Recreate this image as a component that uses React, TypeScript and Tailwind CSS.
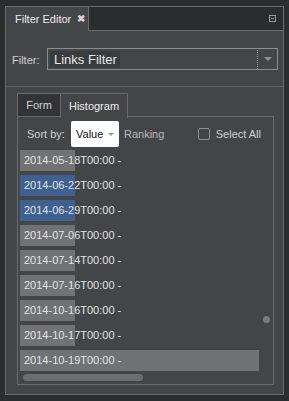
import React from "react";

type Row = {
  label: string;
  tone: "gray" | "blue";
  wide?: boolean;
};

const rows: Row[] = [
  { label: "2014-05-18T00:00 -", tone: "gray" },
  { label: "2014-06-22T00:00 -", tone: "blue" },
  { label: "2014-06-29T00:00 -", tone: "blue" },
  { label: "2014-07-06T00:00 -", tone: "gray" },
  { label: "2014-07-14T00:00 -", tone: "gray" },
  { label: "2014-07-16T00:00 -", tone: "gray" },
  { label: "2014-10-16T00:00 -", tone: "gray" },
  { label: "2014-10-17T00:00 -", tone: "gray" },
  { label: "2014-10-19T00:00 -", tone: "gray", wide: true },
];

const font = { fontFamily: '"Liberation Sans", Arial, sans-serif' };

const HistogramRow = ({ row }: { row: Row }) => (
  <div className="relative h-[25px] flex items-start">
    <div
      className={
        (row.wide ? "w-[239px] " : "w-[55px] ") +
        (row.tone === "blue" ? "bg-[#3e6191] " : "bg-[#717273] ") +
        "h-[21px]"
      }
    />
    <span className="absolute left-[4px] top-[3px] text-[11px] leading-[15px] text-[#e2e2e2] whitespace-nowrap">
      {row.label}
    </span>
  </div>
);

const App = () => {
  return (
    <div className="w-[289px] h-[401px] bg-[#2b2c2e] pt-[6px] pl-[5px] pr-[5px] pb-[6px]" style={font}>
      <div className="h-[389px] border border-[#6a6b6d] bg-[#444547] flex flex-col">
        {/* header */}
        <div className="h-[24px] flex shrink-0">
          <div className="w-[83px] shrink-0 h-full bg-[#444547] border-r border-[#6a6b6d] flex items-center pl-[9px] gap-[6px] whitespace-nowrap">
            <span className="text-[11px] text-[#ececec] leading-none">Filter Editor</span>
            <span className="text-[10px] text-[#d4d4d4] leading-none font-bold">✖</span>
          </div>
          <div className="flex-1 h-full bg-[#2b2c2e] border-b border-[#6a6b6d] flex items-center justify-end pr-[7px]">
            <div className="w-[7px] h-[7px] border border-[#9a9a9a] flex items-center justify-center">
              <div className="w-[3px] h-px bg-[#9a9a9a]" />
            </div>
          </div>
        </div>

        {/* filter row */}
        <div className="h-[56px] shrink-0 flex items-center pl-[6px] pr-[5px] pt-[1px] border-b border-[#5d5e60]">
          <span className="text-[11px] text-[#d2d2d2] w-[35px] pt-[2px]">Filter:</span>
          <div className="flex-1 h-[22px] border border-[#8c8d8f] flex items-center">
            <div className="ml-[2px] h-[16px] w-[70px] bg-[#3a3b3d] flex items-center pl-[4px]">
              <span className="text-[13px] leading-none text-[#e8e8e8]">Links Filter</span>
            </div>
            <div className="flex-1" />
            <div className="h-[19px] border-l border-dotted border-[#9a9a9a] w-[20px] flex items-center justify-center">
              <div className="w-0 h-0 border-l-[4px] border-r-[4px] border-t-[4px] border-l-transparent border-r-transparent border-t-[#8f8f8f]" />
            </div>
          </div>
        </div>

        {/* tabs */}
        <div className="flex-1 flex flex-col pl-[11px] pr-[9px] pt-[6px] pb-[11px]">
          <div className="flex h-[24px] shrink-0">
            <div className="w-[43px] h-full bg-[#323335] border border-[#6a6b6d] border-r-0 flex items-center justify-center">
              <span className="text-[11px] text-[#d0d0d0]">Form</span>
            </div>
            <div className="w-[68px] h-[25px] bg-[#444547] border border-[#6a6b6d] border-b-0 flex items-center justify-center relative z-10">
              <span className="text-[11px] text-[#ececec]">Histogram</span>
            </div>
          </div>
          <div className="flex-1 border border-[#6a6b6d] -mt-px flex flex-col">
            {/* sort bar */}
            <div className="h-[31px] shrink-0 flex items-center pl-[9px] pt-[3px]">
              <span className="text-[11px] text-[#cfcfcf] w-[44px]">Sort by:</span>
              <div className="w-[48px] h-[26px] bg-white rounded-[2px] flex items-center pl-[5px] gap-[5px]">
                <span className="text-[11px] text-[#111]">Value</span>
                <div className="w-0 h-0 border-l-[3px] border-r-[3px] border-t-[3px] border-l-transparent border-r-transparent border-t-[#9a9a9a]" />
              </div>
              <span className="text-[11px] text-[#b8b8b8] ml-[5px]">Ranking</span>
              <div className="flex-1" />
              <div className="w-[12px] h-[12px] border border-[#8d8e90] rounded-[2px] mr-[6px]" />
              <span className="text-[11px] text-[#cfcfcf] mr-[12px]">Select All</span>
            </div>
            {/* list */}
            <div className="flex-1 flex pl-[2px] pt-[2px]">
              <div className="w-[240px] flex flex-col">
                {rows.map((row) => (
                  <HistogramRow key={row.label} row={row} />
                ))}
                <div className="h-[9px] pl-[3px]">
                  <div className="w-[120px] h-[7px] rounded-full bg-[#6c6d6f] -mt-[1px]" />
                </div>
              </div>
              <div className="flex-1 relative">
                <div className="absolute left-[3px] top-[166px] w-[7px] h-[7px] rounded-full bg-[#78797b]" />
              </div>
            </div>
          </div>
        </div>
      </div>
    </div>
  );
};

export default App;
